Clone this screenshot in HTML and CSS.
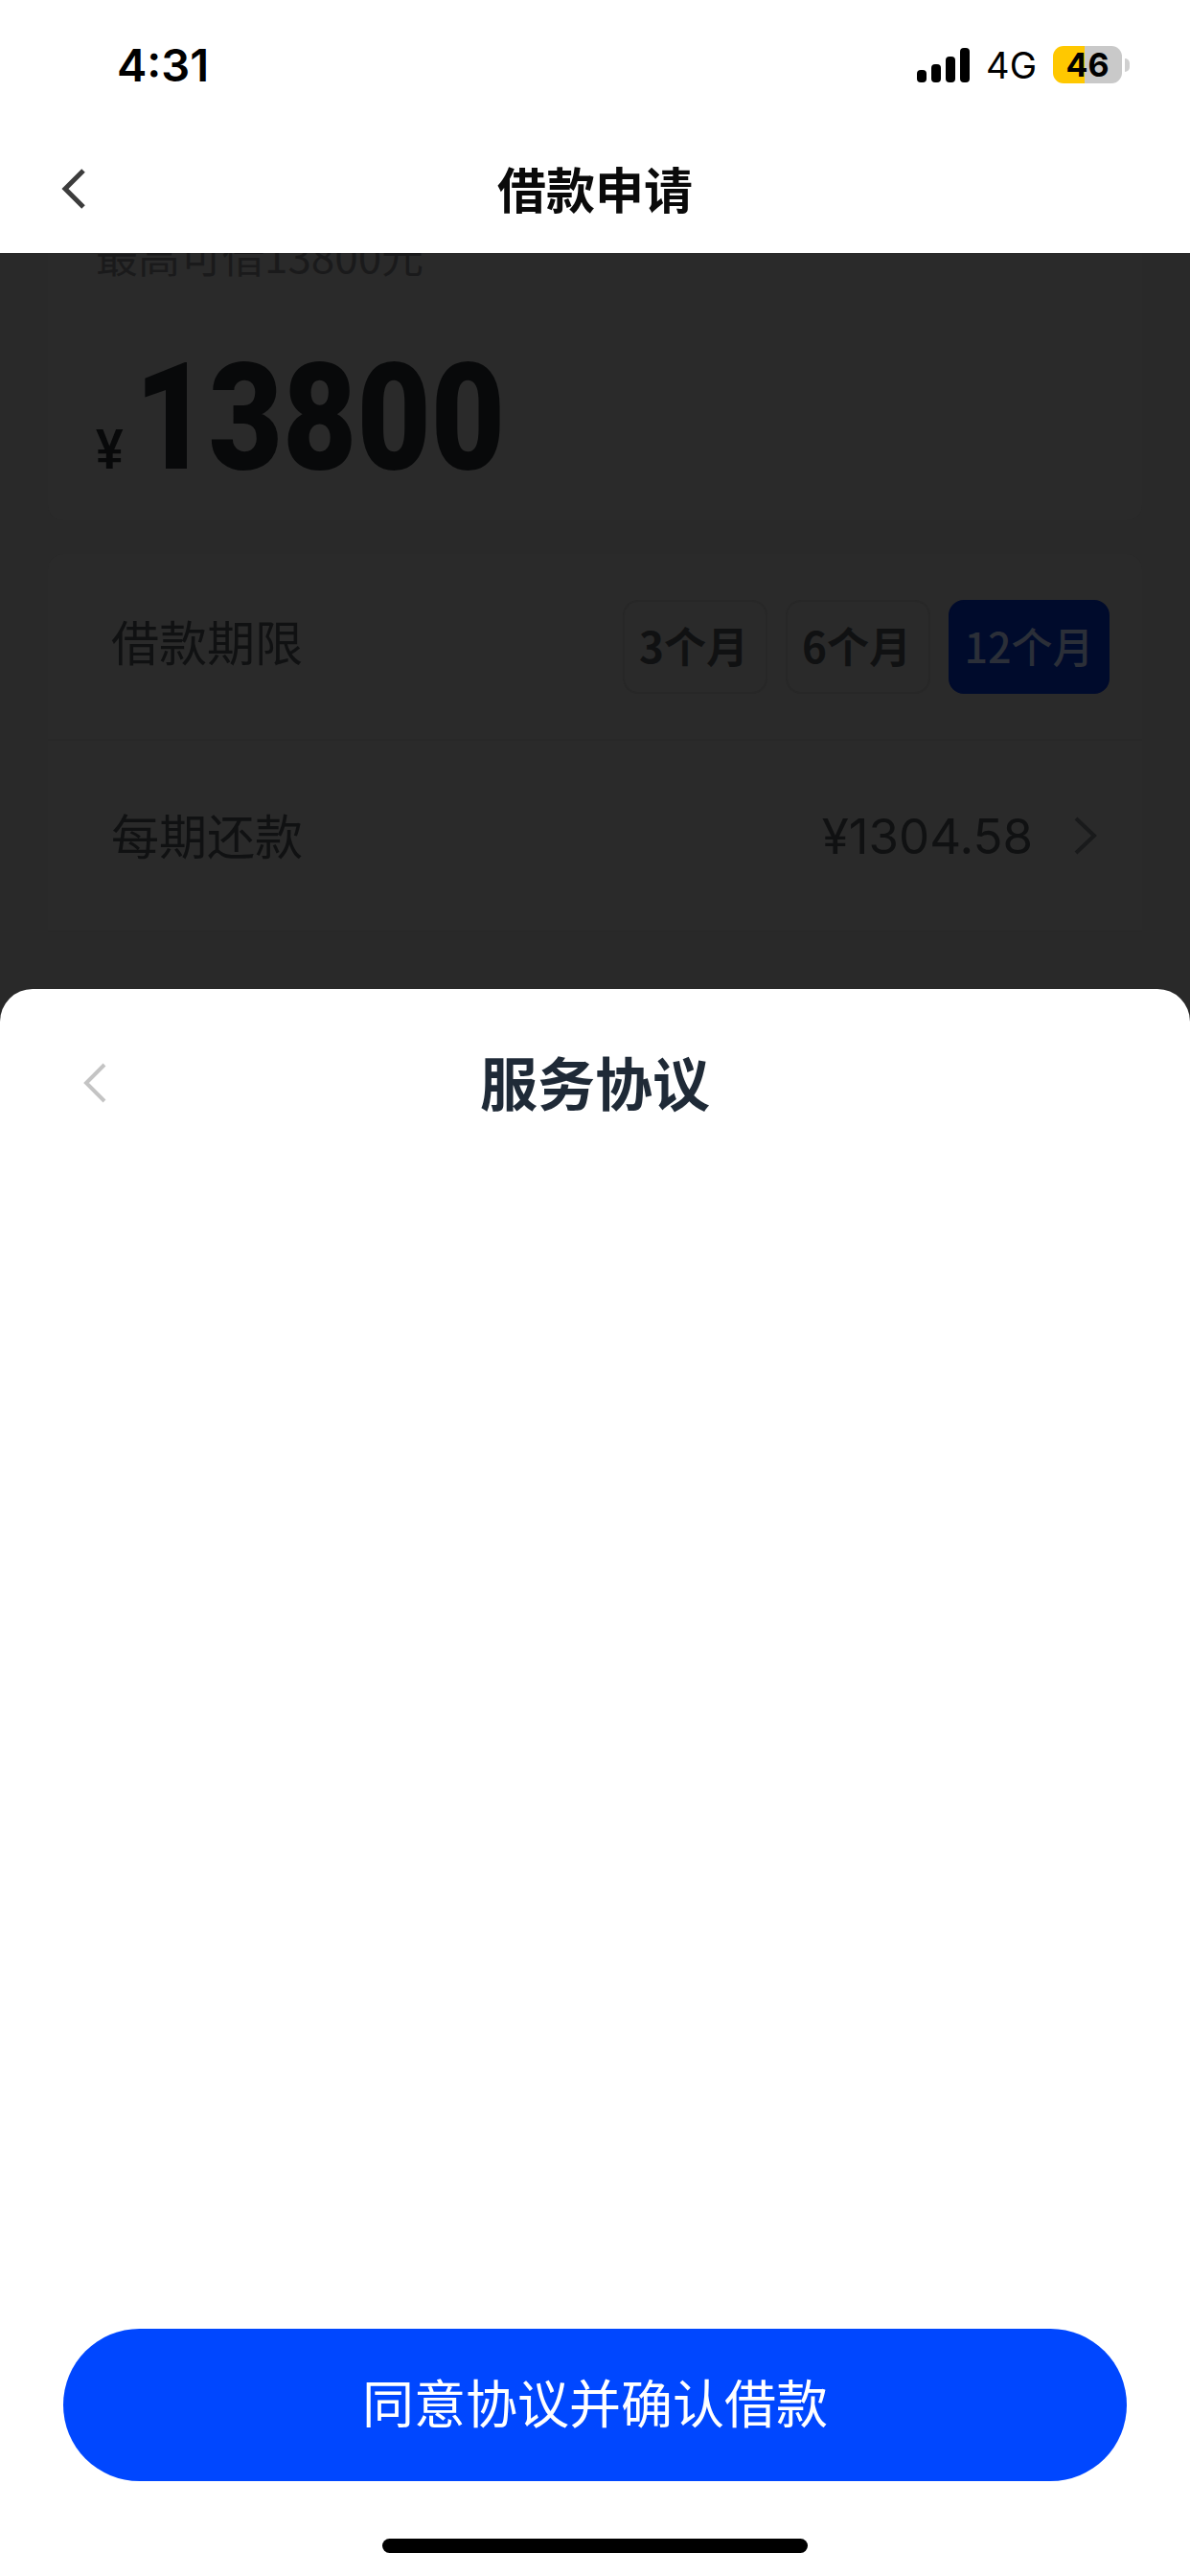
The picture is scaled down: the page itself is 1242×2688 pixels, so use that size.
FILE: index.html
```html
<!DOCTYPE html>
<html>
<head>
    <title>借款申请</title>
    <link rel="stylesheet" href="styles.css">
</head>
<body>

<div class="statusbar">
  <span class="time">4:31</span>
  <div class="status-right">
    <div class="signal">
      <span class="bar bar1"></span>
      <span class="bar bar2"></span>
      <span class="bar bar3"></span>
      <span class="bar bar4"></span>
    </div>
    <span class="network">4G</span>
    <div class="battery"><span class="battery-level">46</span></div>
    <span class="battery-nub"></span>
  </div>
</div>

<div class="navbar">
  <svg class="nav-back" width="26" height="44" viewBox="0 0 26 44"><path d="M23 3 L4 22 L23 41" fill="none" stroke="#3c3c3c" stroke-width="5"/></svg>
  <h1 class="nav-title">借款申请</h1>
</div>

<div class="backdrop">
  <div class="card amount-card">
    <div class="amount-hint">最高可借13800元</div>
    <div class="amount-row">
      <span class="yen">¥</span>
      <span class="amount">13800</span>
    </div>
  </div>

  <div class="card form-card">
    <div class="row term-row">
      <span class="row-label">借款期限</span>
      <div class="terms">
        <span class="term">3个月</span>
        <span class="term">6个月</span>
        <span class="term term-active">12个月</span>
      </div>
    </div>
    <div class="row repay-row">
      <span class="row-label">每期还款</span>
      <div class="repay">
        <span class="repay-value">¥1304.58</span>
        <svg width="26" height="42" viewBox="0 0 26 42"><path d="M3 3 L22 21 L3 39" fill="none" stroke="#191a1b" stroke-width="4"/></svg>
      </div>
    </div>
  </div>
</div>

<div class="sheet">
  <div class="sheet-head">
    <svg class="sheet-back" width="24" height="42" viewBox="0 0 24 42"><path d="M22 2 L3 21 L22 40" fill="none" stroke="#c4c4c4" stroke-width="4"/></svg>
    <h2 class="sheet-title">服务协议</h2>
  </div>
  <div class="sheet-body"></div>
  <button class="confirm">同意协议并确认借款</button>
  <div class="home-indicator"></div>
</div>

</body>
</html>
```

FILE: styles.css
```css
* {
    box-sizing: border-box;
}

body {
    margin: 0;
    width: 1242px;
    height: 2688px;
    display: flex;
    flex-direction: column;
    overflow: hidden;
    background-color: #fff;
    font-family: "Noto Sans CJK SC", sans-serif;
}

/* Status bar */
.statusbar {
    height: 132px;
    padding: 3px 63px 0 122px;
    display: flex;
    justify-content: space-between;
    align-items: center;
    color: #000;
}

.time {
    font-family: Inter, sans-serif;
    font-size: 47px;
    font-weight: 600;
}

.status-right {
    display: flex;
    align-items: center;
}

.signal {
    display: flex;
    align-items: flex-end;
    gap: 5px;
    height: 36px;
    margin-right: 17px;
}

.bar {
    width: 10px;
    background-color: #000;
    border-radius: 4px;
}

.bar1 { height: 13px; }
.bar2 { height: 19px; }
.bar3 { height: 27px; }
.bar4 { height: 36px; }

.network {
    font-family: Inter, sans-serif;
    font-size: 38px;
    margin-right: 17px;
}

.battery {
    width: 72px;
    height: 39px;
    border-radius: 11px;
    background: linear-gradient(to right, #ffc800 46%, #c9c9c9 46%);
    display: flex;
    justify-content: center;
    align-items: center;
}

.battery-level {
    font-family: Inter, sans-serif;
    font-size: 34px;
    font-weight: 700;
}

.battery-nub {
    width: 5px;
    height: 14px;
    margin-left: 3px;
    border-radius: 0 5px 5px 0;
    background-color: #d0d0d0;
}

/* Nav */
.navbar {
    height: 132px;
    padding-left: 64px;
    display: flex;
    align-items: center;
    position: relative;
}

.nav-back {
    margin-top: -2px;
}

.nav-title {
    position: absolute;
    top: 0;
    left: 0;
    right: 0;
    margin: 0;
    text-align: center;
    font-size: 51px;
    font-weight: 700;
    color: #0a0a0a;
    line-height: 128px;
}

/* Dimmed page behind the sheet */
.backdrop {
    height: 808px;
    overflow: hidden;
    background-color: #292929;
    padding: 0 50px;
}

.card {
    background-color: #2a2a2a;
    border-radius: 16px;
}

.amount-card {
    height: 329px;
    margin-top: -50px;
    padding: 24px 50px 0;
}

.amount-hint {
    font-size: 44px;
    line-height: 56px;
    color: #1a1a1b;
}

.amount-row {
    display: flex;
    align-items: baseline;
    gap: 14px;
    margin-top: 62px;
    transform: scaleX(0.855);
    transform-origin: left;
}

.yen {
    font-family: "Liberation Sans", sans-serif;
    font-size: 60px;
    font-weight: 700;
    color: #08090a;
}

.amount {
    font-family: Roboto, sans-serif;
    font-size: 156px;
    line-height: 160px;
    font-weight: 900;
    color: #08090a;
}

.form-card {
    margin-top: 35px;
    border-radius: 16px 16px 0 0;
}

.row {
    padding: 0 34px 0 66px;
    display: flex;
    justify-content: space-between;
    align-items: center;
    border-bottom: 2px solid #282828;
}

.term-row {
    height: 195px;
}

.repay-row {
    height: 200px;
    padding-right: 46px;
}

.row-label {
    font-size: 50px;
    color: #101112;
    margin-bottom: 14px;
}

.repay-row .row-label {
    margin-bottom: 4px;
}

.terms {
    display: flex;
    gap: 19px;
}

.term {
    width: 151px;
    height: 98px;
    border: 2px solid #272727;
    border-radius: 16px;
    padding: 0 3px 4px 0;
    display: flex;
    justify-content: center;
    align-items: center;
    font-size: 44px;
    font-weight: 700;
    color: #101112;
}

.term-active {
    width: 168px;
    padding-right: 0;
    border-color: #000b2c;
    background-color: #000b2c;
    color: #2b2f38;
    font-size: 43px;
    font-weight: 500;
}

.repay {
    display: flex;
    align-items: center;
    gap: 42px;
}

.repay-value {
    font-family: Inter, sans-serif;
    font-size: 51px;
    color: #101112;
}

/* Agreement sheet */
.sheet {
    flex: 1;
    margin-top: -40px;
    background-color: #fff;
    border-radius: 34px 34px 0 0;
    display: flex;
    flex-direction: column;
    align-items: center;
}

.sheet-head {
    width: 100%;
    height: 196px;
    padding-left: 87px;
    display: flex;
    align-items: center;
    position: relative;
}

.sheet-title {
    position: absolute;
    top: 0;
    left: 0;
    right: 0;
    margin: 0;
    text-align: center;
    font-size: 60px;
    line-height: 192px;
    font-weight: 700;
    color: #1f2a37;
}

.sheet-body {
    flex: 1;
}

.confirm {
    width: 1110px;
    height: 159px;
    padding-bottom: 10px;
    border: none;
    border-radius: 80px;
    background-color: #0047ff;
    color: #fff;
    font-family: inherit;
    font-size: 54px;
}

.home-indicator {
    width: 444px;
    height: 15px;
    margin: 60px 0 24px;
    border-radius: 8px;
    background-color: #000;
}
```
